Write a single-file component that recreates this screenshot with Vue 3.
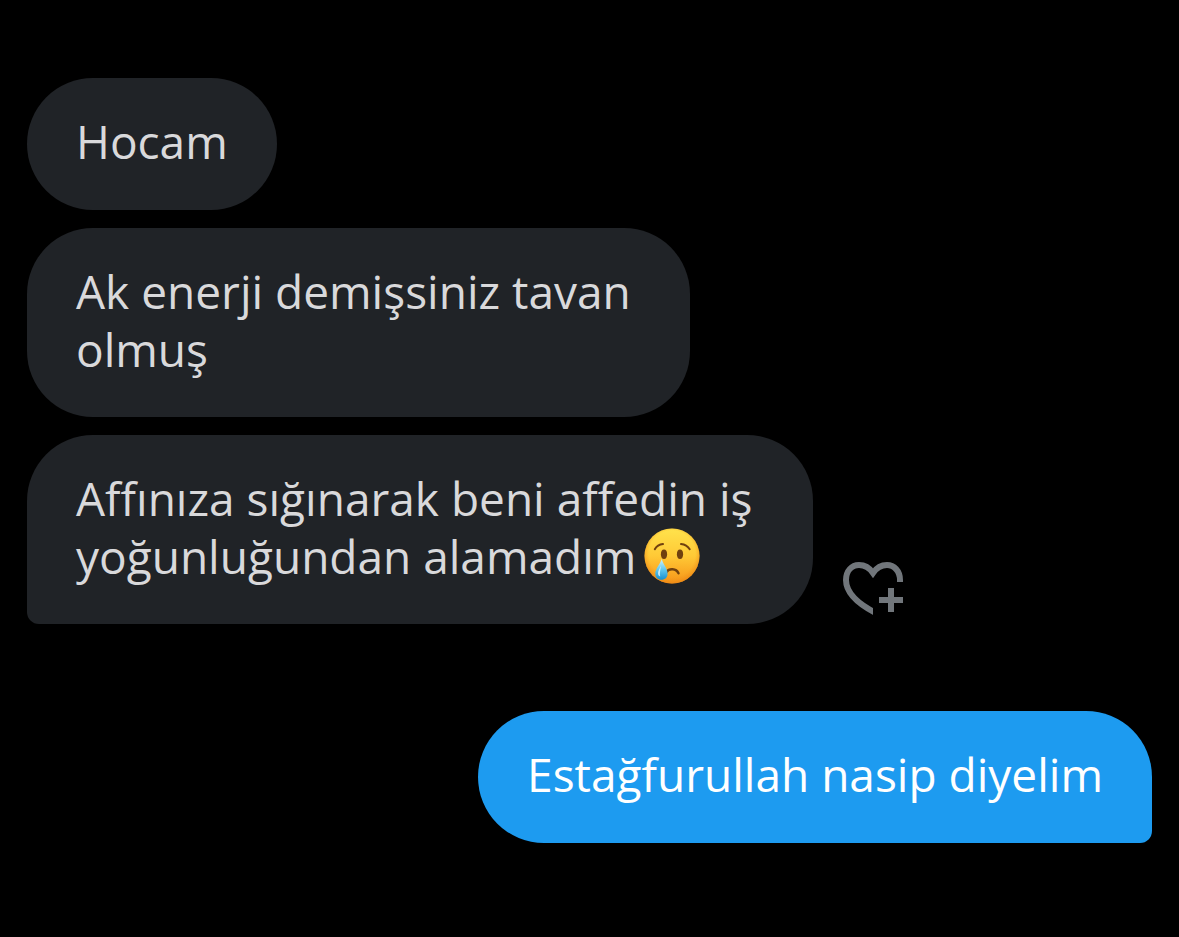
<script setup>
const received = [
  { id: 1, text: 'Hocam' },
  { id: 2, text: 'Ak enerji demişsiniz tavan olmuş', size: 'medium' },
  { id: 3, text: 'Affınıza sığınarak beni affedin iş yoğunluğundan alamadım', size: 'large', crying: true, last: true },
]
const sent = [{ id: 4, text: 'Estağfurullah nasip diyelim' }]
</script>

<template>
  <main class="chat">
    <div v-for="m in received" :key="m.id" class="row">
      <p class="bubble" :class="[m.size, { last: m.last }]">{{ m.text }}<template v-if="m.crying">&nbsp;<svg class="emoji" viewBox="0 0 56 56" role="img" aria-label="😢">
        <defs>
          <linearGradient id="face" x1="0" y1="0" x2="0" y2="1">
            <stop offset="0" stop-color="#ffe34c" />
            <stop offset="0.5" stop-color="#ffc936" />
            <stop offset="1" stop-color="#f79418" />
          </linearGradient>
          <radialGradient id="shade" cx="0.5" cy="0.46" r="0.54">
            <stop offset="0.78" stop-color="#f39a1c" stop-opacity="0" />
            <stop offset="1" stop-color="#ec8615" stop-opacity="0.75" />
          </radialGradient>
          <linearGradient id="tear" x1="0" y1="0" x2="0" y2="1">
            <stop offset="0" stop-color="#d4f3fb" />
            <stop offset="0.5" stop-color="#62c8ee" />
            <stop offset="1" stop-color="#168fd0" />
          </linearGradient>
        </defs>
        <circle cx="28" cy="28" r="27.5" fill="url(#face)" />
        <circle cx="28" cy="28" r="27.5" fill="url(#shade)" />
        <g fill="none" stroke="#70400f" stroke-width="2" stroke-linecap="round">
          <path d="M10.8 21.2C12.5 18.2 15.3 16.4 19 16" />
          <path d="M37 16C40.7 16.4 43.8 18.2 45.7 21.2" />
          <path d="M22.5 44C25 40.2 32.2 40.2 34.5 45.3" stroke-width="2.4" />
        </g>
        <ellipse cx="20" cy="26.3" rx="3.1" ry="4.7" fill="#70400f" />
        <ellipse cx="36" cy="26.3" rx="3.1" ry="4.7" fill="#70400f" />
        <path d="M17.7 31C19 36 23.6 40.5 23.6 45.8C23.6 49.5 21 51.8 17.5 51.8C14 51.8 11.3 49.5 11.3 45.8C11.3 40.5 16.3 36 17.7 31Z" fill="url(#tear)" />
        <path d="M17 38C15.4 41 14 43 14 45.6C14 47.2 15 48.2 16.2 48.4C15.4 45 16.5 41.5 17 38Z" fill="#effcff" opacity="0.75" />
      </svg></template></p>
      <button v-if="m.last" class="react" type="button" aria-label="Add reaction">
        <svg viewBox="0 0 60 53" aria-hidden="true">
          <defs><clipPath id="cut"><path d="M0 0H60V20H30V53H0Z" /></clipPath></defs>
          <path clip-path="url(#cut)" d="M57 24V18C57 9 51 3 44 3C38 3 33.5 5.8 30 11C26.5 5.8 22 3 16 3C8.5 3 3 9 3 18C3 30 13 41 34 51.6" fill="none" stroke="#71767b" stroke-width="6" />
          <path d="M45 26H51V35H60V41H51V50H45V41H36V35H45Z" fill="#71767b" />
        </svg>
      </button>
    </div>
    <div v-for="m in sent" :key="m.id" class="row own">
      <p class="bubble last">{{ m.text }}</p>
    </div>
  </main>
</template>

<style>
body {
  margin: 0;
  background: #000;
}
</style>

<style scoped>
.chat {
  box-sizing: border-box;
  min-height: 100vh;
  padding: 78px 27px;
  display: flex;
  flex-direction: column;
  gap: 18px;
  background: #000;
  font-family: "Open Sans", "Noto Sans", sans-serif;
  font-size: 46px;
  line-height: 58px;
}
.row {
  display: flex;
  align-items: flex-end;
  gap: 30px;
}
.bubble {
  box-sizing: border-box;
  min-height: 132px;
  margin: 0;
  padding: 34px 49px 39px;
  border-radius: 66px;
  background: #202327;
  color: #d9d9db;
}
.medium {
  max-width: 663px;
}
.large {
  max-width: 786px;
}
.bubble.last {
  border-bottom-left-radius: 12px;
}
.own {
  justify-content: flex-end;
  margin-top: 69px;
}
.own .bubble {
  background: #1d9bf0;
  color: #fff;
}
.own .bubble.last {
  border-bottom-left-radius: 66px;
  border-bottom-right-radius: 12px;
}
.emoji {
  width: 56px;
  height: 56px;
  margin: -8px -4px;
  vertical-align: -2px;
}
.react {
  flex: none;
  padding: 0;
  margin-bottom: 9px;
  border: 0;
  background: none;
  cursor: pointer;
}
.react svg {
  display: block;
  width: 60px;
  height: 53px;
}
</style>
